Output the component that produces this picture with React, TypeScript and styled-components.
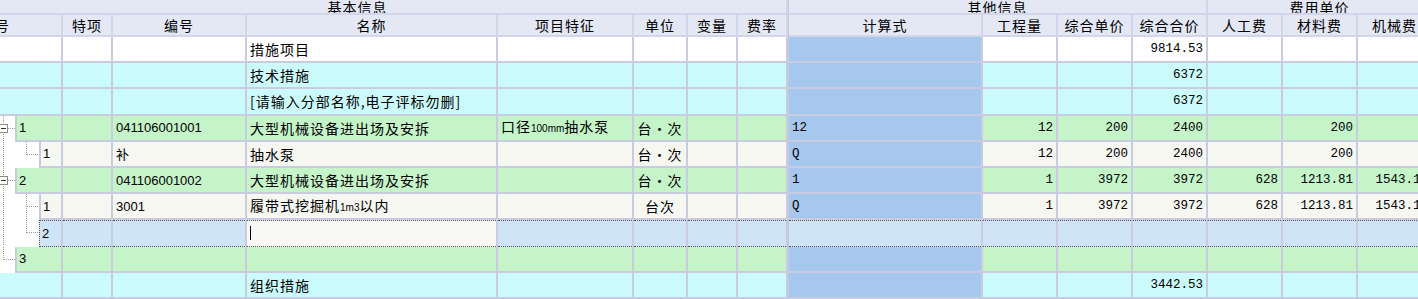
import React from 'react';
import styled, { createGlobalStyle } from 'styled-components';

const LINE = '#c9cbe1';
const HEAD_LINE = '#d3d6ea';
const COLS = [134, 50, 134, 251, 136, 54, 50, 50, 1, 194, 75, 75, 75, 75, 75, 75];

const BG = {
  total: '#ffffff',
  section: '#ccfbfb',
  item: '#c5f4c9',
  sub: '#f7f7f2',
  edit: '#cfe4f7',
};
const FORMULA_BG = '#a7c8ee';

type Kind = keyof typeof BG;
type Font = 'cjk' | 'sans' | 'mono';

const FONTS: Record<Font, string> = {
  cjk: `font-family: "Noto Sans CJK SC", sans-serif; font-size: 14px; letter-spacing: 1px;`,
  sans: `font-family: "Liberation Sans", "Noto Sans CJK SC", sans-serif; font-size: 13px; letter-spacing: 0;`,
  mono: `font-family: "Liberation Mono", monospace; font-size: 12.5px; letter-spacing: 0;`,
};

const GlobalStyle = createGlobalStyle`
  html, body {
    margin: 0;
    padding: 0;
    background: #fff;
    overflow: hidden;
  }
  body {
    font-family: "Noto Sans CJK SC", sans-serif;
    color: #000;
  }
`;

const Viewport = styled.div`
  width: 1418px;
  height: 299px;
  overflow: hidden;
  background: #fff;
`;

const Sheet = styled.div`
  display: grid;
  grid-template-columns: ${COLS.map(c => `${c}px`).join(' ')};
  grid-template-rows: 15px 22px repeat(10, 26.2px);
  width: ${COLS.reduce((a, b) => a + b, 0)}px;
  margin-left: -71px;
`;

const HeaderCell = styled.div<{ $span?: number }>`
  grid-column: span ${p => p.$span ?? 1};
  box-sizing: border-box;
  background: #e4e8f5;
  border-right: 2px solid ${HEAD_LINE};
  border-bottom: 2px solid ${HEAD_LINE};
  display: flex;
  align-items: center;
  justify-content: center;
  overflow: hidden;
  white-space: nowrap;
  ${FONTS.cjk}
`;

const GroupCell = styled(HeaderCell)`
  align-items: flex-end;
`;

const GroupLabel = styled.span`
  line-height: 16px;
  margin-bottom: -2px;
`;

const Separator = styled.div`
  background: #c4c7de;
`;

const Cell = styled.div<{ $bg: string; $align?: 'left' | 'right' | 'center'; $font?: Font; $edit?: boolean }>`
  box-sizing: border-box;
  background: ${p => p.$bg};
  border-right: 2px solid ${LINE};
  border-top: ${p => (p.$edit ? '1px dotted #555' : 'none')};
  border-bottom: ${p => (p.$edit ? '1px dotted #555' : `2px solid ${LINE}`)};
  display: flex;
  align-items: center;
  justify-content: ${p => (p.$align === 'right' ? 'flex-end' : p.$align === 'center' ? 'center' : 'flex-start')};
  padding: 0 3px;
  overflow: hidden;
  white-space: nowrap;
  ${p => FONTS[p.$font ?? 'cjk']}
`;

const Text = styled.span`
  line-height: 20px;
`;

const TreeCell = styled.div`
  display: flex;
  background: #fff;
  overflow: hidden;
`;

const Gutter = styled.div<{ $width: number }>`
  flex: 0 0 ${p => p.$width}px;
  svg {
    display: block;
    width: 100%;
    height: 100%;
  }
`;

const TreeBody = styled.div<{ $bg: string; $edit?: boolean }>`
  flex: 1;
  box-sizing: border-box;
  background: ${p => p.$bg};
  border-left: ${p => (p.$edit ? '1px dotted #555' : `2px solid ${LINE}`)};
  border-right: 2px solid ${LINE};
  border-top: ${p => (p.$edit ? '1px dotted #555' : 'none')};
  border-bottom: ${p => (p.$edit ? '1px dotted #555' : `2px solid ${LINE}`)};
  display: flex;
  align-items: center;
  padding-left: 2px;
  ${FONTS.sans}
`;

const Small = styled.span`
  font-family: "Liberation Sans", sans-serif;
  font-size: 10px;
  letter-spacing: 0;
`;

const Caret = styled.span`
  display: inline-block;
  width: 1px;
  height: 14px;
  background: #000;
`;

interface TreeInfo {
  level: 1 | 2;
  box?: boolean;
  last?: boolean;
  parentLast?: boolean;
}

interface Row {
  kind: Kind;
  label?: string;
  tree?: TreeInfo;
  code?: string;
  name?: React.ReactNode;
  feature?: React.ReactNode;
  unit?: string;
  formula?: string;
  values?: string[];
}

const rows: Row[] = [
  { kind: 'total', name: '措施项目', values: ['', '', '9814.53', '', '', ''] },
  { kind: 'section', name: '技术措施', values: ['', '', '6372', '', '', ''] },
  { kind: 'section', name: '[请输入分部名称,电子评标勿删]', values: ['', '', '6372', '', '', ''] },
  {
    kind: 'item',
    label: '1',
    tree: { level: 1, box: true },
    code: '041106001001',
    name: '大型机械设备进出场及安拆',
    feature: (
      <>
        口径<Small>100mm</Small>抽水泵
      </>
    ),
    unit: '台・次',
    formula: '12',
    values: ['12', '200', '2400', '', '200', ''],
  },
  {
    kind: 'sub',
    label: '1',
    tree: { level: 2, last: true },
    code: '补',
    name: '抽水泵',
    unit: '台・次',
    formula: 'Q',
    values: ['12', '200', '2400', '', '200', ''],
  },
  {
    kind: 'item',
    label: '2',
    tree: { level: 1, box: true },
    code: '041106001002',
    name: '大型机械设备进出场及安拆',
    unit: '台・次',
    formula: '1',
    values: ['1', '3972', '3972', '628', '1213.81', '1543.19'],
  },
  {
    kind: 'sub',
    label: '1',
    tree: { level: 2 },
    code: '3001',
    name: (
      <>
        履带式挖掘机<Small>1m3</Small>以内
      </>
    ),
    unit: '台次',
    formula: 'Q',
    values: ['1', '3972', '3972', '628', '1213.81', '1543.19'],
  },
  { kind: 'edit', label: '2', tree: { level: 2, last: true } },
  { kind: 'item', label: '3', tree: { level: 1, last: true } },
  { kind: 'section', name: '组织措施', values: ['', '', '3442.53', '', '', ''] },
];

const DOT = { stroke: '#9a9a9a', strokeWidth: 1, strokeDasharray: '1 1' };
const X1 = 74.5;
const X2 = 97.5;
const MID = 12.5;

function TreeLines({ tree, width }: { tree: TreeInfo; width: number }) {
  if (tree.level === 1) {
    return (
      <svg shapeRendering="crispEdges">
        <line x1={X1} y1={0} x2={X1} y2={tree.last ? MID : '100%'} {...DOT} />
        <line x1={tree.box ? 79 : X1} y1={MID} x2={width} y2={MID} {...DOT} />
        {tree.box && (
          <>
            <rect x={70.5} y={8.5} width={8} height={8} fill="#fff" stroke="#8a8a8a" />
            <line x1={72} y1={MID} x2={77} y2={MID} stroke="#333" />
          </>
        )}
      </svg>
    );
  }
  return (
    <svg shapeRendering="crispEdges">
      {!tree.parentLast && <line x1={X1} y1={0} x2={X1} y2="100%" {...DOT} />}
      <line x1={X2} y1={0} x2={X2} y2={tree.last ? MID : '100%'} {...DOT} />
      <line x1={X2} y1={MID} x2={width} y2={MID} {...DOT} />
    </svg>
  );
}

function DataRow({ row }: { row: Row }) {
  const bg = BG[row.kind];
  const edit = row.kind === 'edit';
  const values = row.values ?? ['', '', '', '', '', ''];
  const gutter = row.tree ? (row.tree.level === 1 ? 86 : 110) : 0;

  return (
    <>
      {row.tree ? (
        <TreeCell>
          <Gutter $width={gutter}>
            <TreeLines tree={row.tree} width={gutter} />
          </Gutter>
          <TreeBody $bg={bg} $edit={edit}>{row.label}</TreeBody>
        </TreeCell>
      ) : (
        <Cell $bg={bg} />
      )}
      <Cell $bg={bg} $edit={edit} />
      <Cell $bg={bg} $edit={edit} $font="sans">{row.code}</Cell>
      <Cell $bg={edit ? '#f8f8f5' : bg} $edit={edit}>
        {edit ? <Caret /> : <Text>{row.name}</Text>}
      </Cell>
      <Cell $bg={bg} $edit={edit}><Text>{row.feature}</Text></Cell>
      <Cell $bg={bg} $edit={edit} $align="center">{row.unit}</Cell>
      <Cell $bg={bg} $edit={edit} />
      <Cell $bg={bg} $edit={edit} />
      <Separator />
      <Cell $bg={edit ? bg : FORMULA_BG} $edit={edit} $font="mono">{row.formula}</Cell>
      {values.map((v, i) => (
        <Cell key={i} $bg={bg} $edit={edit} $font="mono" $align="right">{v}</Cell>
      ))}
    </>
  );
}

const headers = ['序号', '特项', '编号', '名称', '项目特征', '单位', '变量', '费率'];
const otherHeaders = ['计算式', '工程量', '综合单价', '综合合价', '人工费', '材料费', '机械费'];

export default function App() {
  return (
    <>
      <GlobalStyle />
      <Viewport>
        <Sheet>
          <GroupCell $span={8}><GroupLabel>基本信息</GroupLabel></GroupCell>
          <Separator />
          <GroupCell $span={4}><GroupLabel>其他信息</GroupLabel></GroupCell>
          <GroupCell $span={3}><GroupLabel>费用单价</GroupLabel></GroupCell>

          {headers.map(h => (
            <HeaderCell key={h}>{h}</HeaderCell>
          ))}
          <Separator />
          {otherHeaders.map(h => (
            <HeaderCell key={h}>{h}</HeaderCell>
          ))}

          {rows.map((row, i) => (
            <DataRow key={i} row={row} />
          ))}
        </Sheet>
      </Viewport>
    </>
  );
}
